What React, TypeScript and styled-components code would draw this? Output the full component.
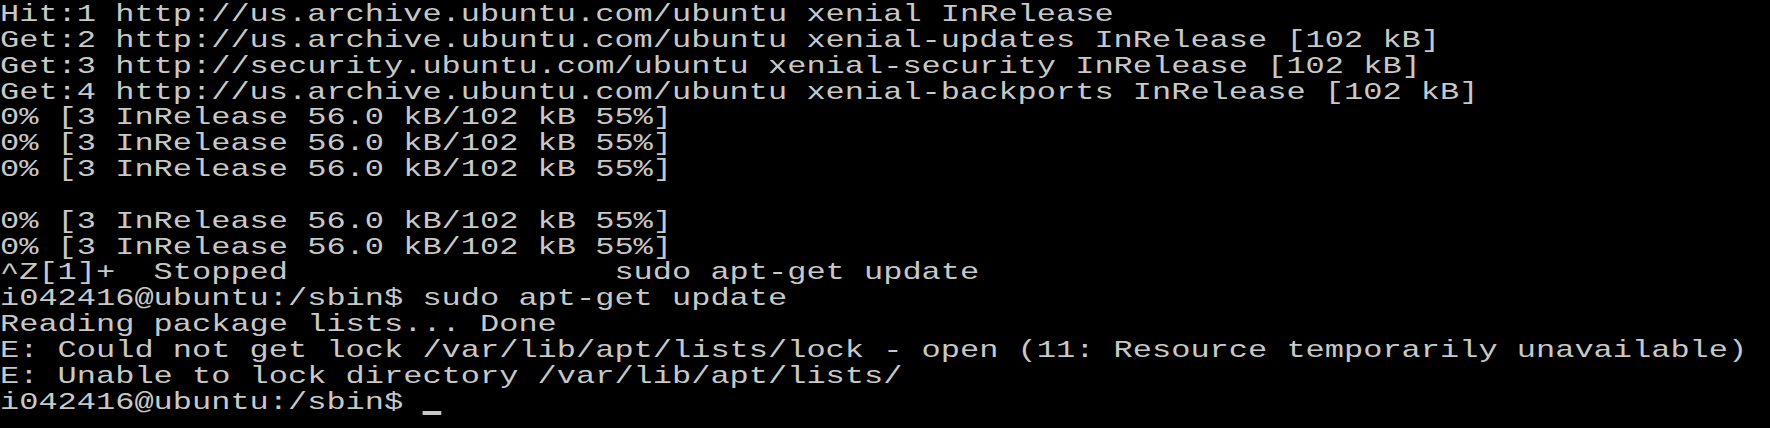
import React from "react";
import styled, { createGlobalStyle } from "styled-components";

const GlobalStyle = createGlobalStyle`
  html, body {
    margin: 0;
    padding: 0;
    background: #000;
  }
`;

const Terminal = styled.div`
  width: 1770px;
  height: 428px;
  padding-top: 2px;
  box-sizing: border-box;
  background: #000;
  overflow: hidden;
`;

// console font is wide and short, so stretch a mono face horizontally
const Screen = styled.pre`
  margin: 0;
  padding: 0;
  font-family: "Liberation Mono", "DejaVu Sans Mono", monospace;
  font-size: 24px;
  line-height: 25.85px;
  color: #c8c8c8;
  white-space: pre;
  transform: scaleX(1.3331);
  transform-origin: 0 0;
`;

const Line = styled.div`
  height: 25.85px;
`;

const Cursor = styled.span`
  display: inline-block;
  width: 1ch;
  height: 4px;
  background: #c8c8c8;
  vertical-align: -6px;
`;

const lines = [
  "Hit:1 http://us.archive.ubuntu.com/ubuntu xenial InRelease",
  "Get:2 http://us.archive.ubuntu.com/ubuntu xenial-updates InRelease [102 kB]",
  "Get:3 http://security.ubuntu.com/ubuntu xenial-security InRelease [102 kB]",
  "Get:4 http://us.archive.ubuntu.com/ubuntu xenial-backports InRelease [102 kB]",
  "0% [3 InRelease 56.0 kB/102 kB 55%]",
  "0% [3 InRelease 56.0 kB/102 kB 55%]",
  "0% [3 InRelease 56.0 kB/102 kB 55%]",
  "",
  "0% [3 InRelease 56.0 kB/102 kB 55%]",
  "0% [3 InRelease 56.0 kB/102 kB 55%]",
  "^Z[1]+  Stopped                 sudo apt-get update",
  "i042416@ubuntu:/sbin$ sudo apt-get update",
  "Reading package lists... Done",
  "E: Could not get lock /var/lib/apt/lists/lock - open (11: Resource temporarily unavailable)",
  "E: Unable to lock directory /var/lib/apt/lists/",
];

const prompt = "i042416@ubuntu:/sbin$ ";

export default function App() {
  return (
    <>
      <GlobalStyle />
      <Terminal>
        <Screen>
          {lines.map((text, i) => (
            <Line key={`ln-${i}`}>{text}</Line>
          ))}
          <Line>
            {prompt}
            <Cursor />
          </Line>
        </Screen>
      </Terminal>
    </>
  );
}
